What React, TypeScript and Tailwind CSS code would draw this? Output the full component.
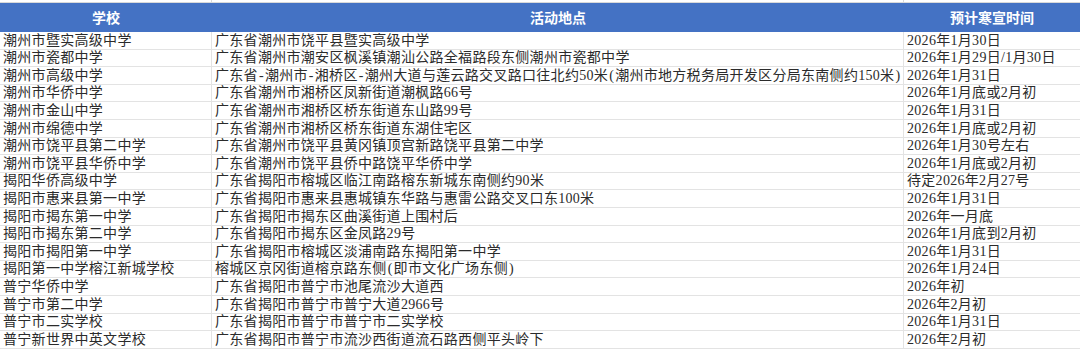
import React from 'react';

type Row = { school: string; place: string; time: string };

const rows: Row[] = [
  { school: '潮州市暨实高级中学', place: '广东省潮州市饶平县暨实高级中学', time: '2026年1月30日' },
  { school: '潮州市瓷都中学', place: '广东省潮州市潮安区枫溪镇潮汕公路全福路段东侧潮州市瓷都中学', time: '2026年1月29日/1月30日' },
  { school: '潮州市高级中学', place: '广东省-潮州市-湘桥区-潮州大道与莲云路交叉路口往北约50米(潮州市地方税务局开发区分局东南侧约150米)', time: '2026年1月31日' },
  { school: '潮州市华侨中学', place: '广东省潮州市湘桥区凤新街道潮枫路66号', time: '2026年1月底或2月初' },
  { school: '潮州市金山中学', place: '广东省潮州市湘桥区桥东街道东山路99号', time: '2026年1月31日' },
  { school: '潮州市绵德中学', place: '广东省潮州市湘桥区桥东街道东湖住宅区', time: '2026年1月底或2月初' },
  { school: '潮州市饶平县第二中学', place: '广东省潮州市饶平县黄冈镇顶宫新路饶平县第二中学', time: '2026年1月30号左右' },
  { school: '潮州市饶平县华侨中学', place: '广东省潮州市饶平县侨中路饶平华侨中学', time: '2026年1月底或2月初' },
  { school: '揭阳华侨高级中学', place: '广东省揭阳市榕城区临江南路榕东新城东南侧约90米', time: '待定2026年2月27号' },
  { school: '揭阳市惠来县第一中学', place: '广东省揭阳市惠来县惠城镇东华路与惠雷公路交叉口东100米', time: '2026年1月31日' },
  { school: '揭阳市揭东第一中学', place: '广东省揭阳市揭东区曲溪街道上围村后', time: '2026年一月底' },
  { school: '揭阳市揭东第二中学', place: '广东省揭阳市揭东区金凤路29号', time: '2026年1月底到2月初' },
  { school: '揭阳市揭阳第一中学', place: '广东省揭阳市榕城区淡浦南路东揭阳第一中学', time: '2026年1月31日' },
  { school: '揭阳第一中学榕江新城学校', place: '榕城区京冈街道榕京路东侧(即市文化广场东侧)', time: '2026年1月24日' },
  { school: '普宁华侨中学', place: '广东省揭阳市普宁市池尾流沙大道西', time: '2026年初' },
  { school: '普宁市第二中学', place: '广东省揭阳市普宁市普宁大道2966号', time: '2026年2月初' },
  { school: '普宁市二实学校', place: '广东省揭阳市普宁市普宁市二实学校', time: '2026年1月31日' },
  { school: '普宁新世界中英文学校', place: '广东省揭阳市普宁市流沙西街道流石路西侧平头岭下', time: '2026年2月初' },
];

// half-width punctuation in the sheet font takes a full 0.5em cell
const Txt = ({ s }: { s: string }) => (
  <span>
    {s.split(/([-()])/).map((p, i) =>
      /^[-()]$/.test(p) ? (
        <span key={i} className="inline-block w-[7px] text-center">{p}</span>
      ) : (
        <React.Fragment key={i}>{p}</React.Fragment>
      )
    )}
  </span>
);

export default function App() {
  return (
    <div className="w-[1080px] h-[350px] overflow-hidden bg-white font-['Liberation_Serif','Noto_Sans_CJK_SC',serif]">
      {/* top strip of the previous row */}
      <div className="grid grid-cols-[212px_692px_176px] h-[3px] border-b border-[#d9d9d9]">
        <div className="border-r border-[#d9d9d9]"></div>
        <div className="border-r border-[#d9d9d9]"></div>
        <div></div>
      </div>

      {/* header */}
      <div className="grid grid-cols-[212px_692px_176px] h-[29px] bg-[#4472c4] text-white font-bold text-[14px] font-['Noto_Sans_CJK_SC',sans-serif]">
        <div className="flex items-center justify-center">学校</div>
        <div className="flex items-center justify-center">活动地点</div>
        <div className="flex items-center justify-center">预计寒宣时间</div>
      </div>

      {/* body */}
      {rows.map((r, i) => (
        <div key={i} className="grid grid-cols-[212px_692px_176px] h-[17.6px] border-b border-[#e3e3e3] text-[14px] leading-none tracking-[0.3px] text-[#2b2b2b]">
          <div className="flex items-end pl-[3px] pb-[1px] border-r border-[#e3e3e3] whitespace-nowrap overflow-hidden"><Txt s={r.school} /></div>
          <div className="flex items-end pl-[3px] pb-[1px] border-r border-[#e3e3e3] whitespace-nowrap overflow-hidden"><Txt s={r.place} /></div>
          <div className="flex items-end pl-[3px] pb-[1px] whitespace-nowrap overflow-hidden"><Txt s={r.time} /></div>
        </div>
      ))}
    </div>
  );
}
